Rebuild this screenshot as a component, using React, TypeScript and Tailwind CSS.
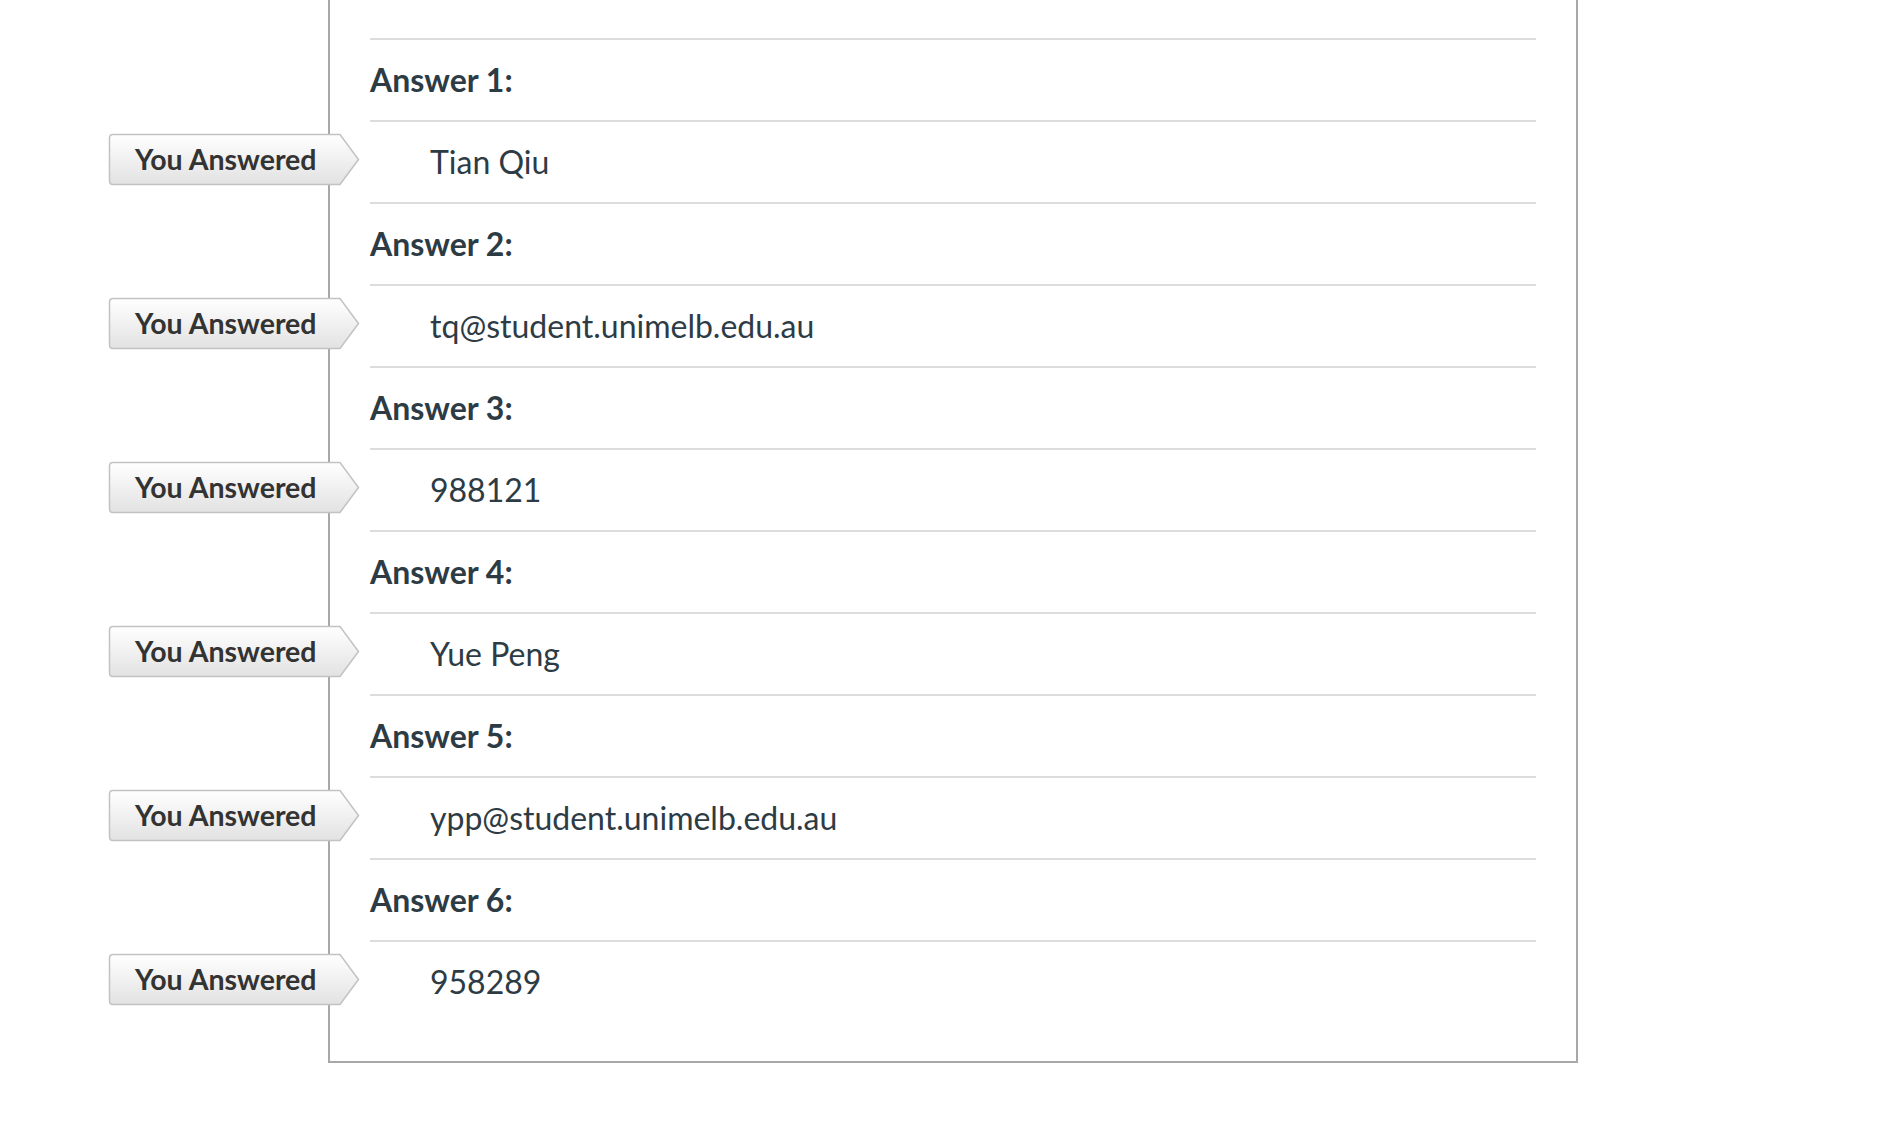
import React from 'react'

const answers = [
    'Tian Qiu',
    'tq@student.unimelb.edu.au',
    '988121',
    'Yue Peng',
    'ypp@student.unimelb.edu.au',
    '958289',
]

// "You Answered" flag that sits across the left border of the question box
function AnswerArrow() {
    return (
        <div className="absolute left-[-262px] top-[11px] w-[252px] h-[53px] flex items-center pl-[27px]">
            <svg className="absolute inset-0" width="252" height="53" viewBox="0 0 252 53">
                <defs>
                    <linearGradient id="arrowFill" x1="0" y1="0" x2="0" y2="1">
                        <stop offset="0" stopColor="#ffffff" />
                        <stop offset="1" stopColor="#e2e2e2" />
                    </linearGradient>
                </defs>
                <path
                    d="M5 1.5 H232 L250.5 26.5 L232 51.5 H5 Q1.5 51.5 1.5 48 V5 Q1.5 1.5 5 1.5 Z"
                    fill="url(#arrowFill)"
                    stroke="#c2c2c2"
                    strokeWidth="1.5"
                />
            </svg>
            <span className="relative text-[28.5px] font-bold text-[#333333] leading-none">You Answered</span>
        </div>
    )
}

export default function App() {
    return (
        <div className="min-h-[1124px] bg-white font-['Lato','Liberation_Sans',sans-serif]">
            <div className="ml-[328px] w-[1250px] border-2 border-t-0 border-[#a8a8a8] pt-[38px] pb-[39px] px-[40px]">
                {answers.map((value, i) => (
                    <div key={i}>
                        <div className="h-[82px] border-t-2 border-[#dcdcdc] flex items-center">
                            <span className="text-[32px] font-bold text-[#2d3b45]">Answer {i + 1}:</span>
                        </div>
                        <div className="relative h-[82px] border-t-2 border-[#dcdcdc] flex items-center pl-[60px]">
                            <AnswerArrow />
                            <span className="text-[32px] text-[#2d3b45]">{value}</span>
                        </div>
                    </div>
                ))}
            </div>
        </div>
    )
}
